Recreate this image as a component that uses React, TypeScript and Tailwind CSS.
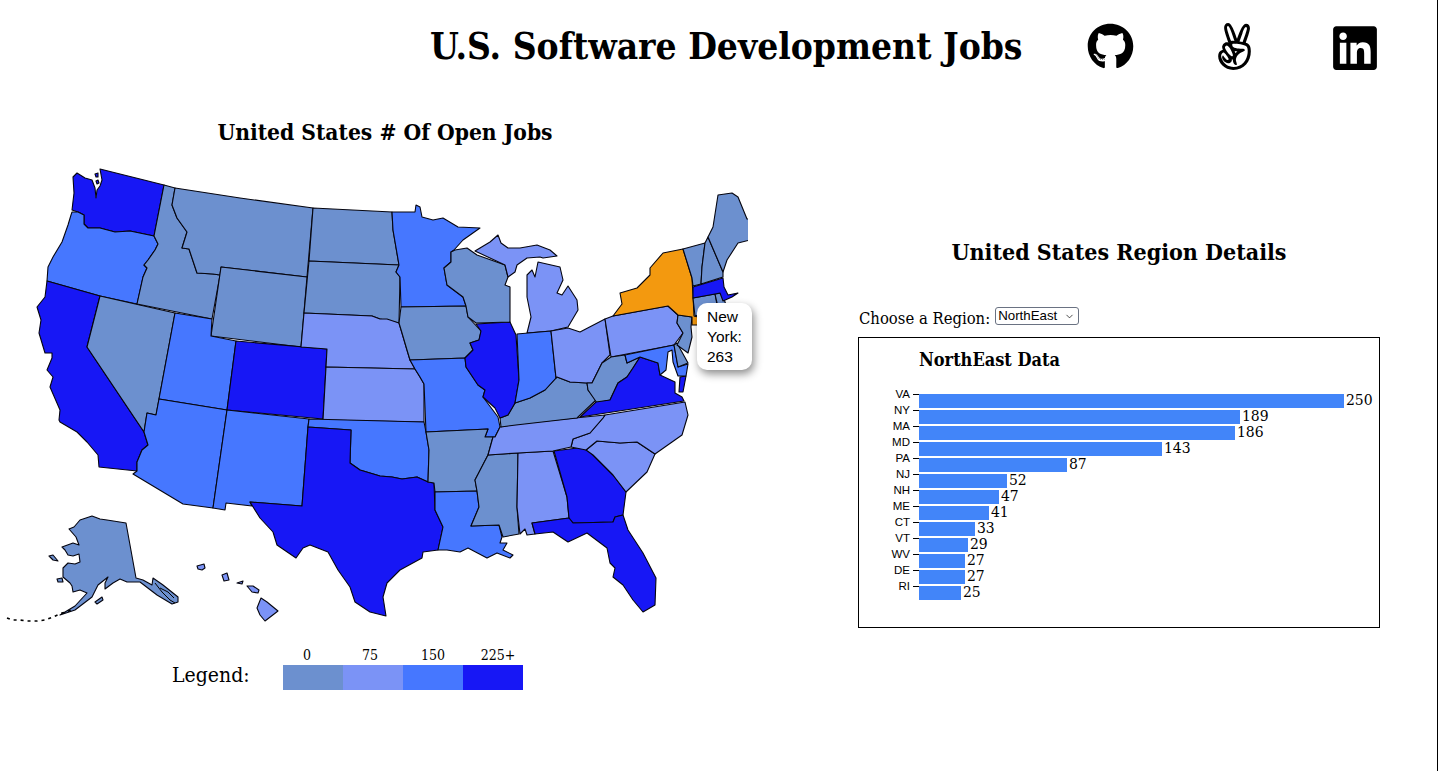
import React from 'react';
import { FaGithub, FaLinkedin, FaAngellist } from 'react-icons/fa';
import { ChevronDown } from 'lucide-react';

const BASE = '#6c90cf';
const LIGHT = '#7b93f6';
const MID = '#4677ff';
const DARK = '#1717f5';
const ORANGE = '#f3990f';

// state outlines, in page pixels
const STATES: [string, string, string][] = [
  ['WA', DARK, '100,169 164,185 154,236 130,231 115,232 100,228 88,228 84,224 84,215 78,212 72,210 74,193 73,177 77,173 85,178 92,180 95,188 96,198 97,190 100,186 102,180'],
  ['WAI', DARK, '95,174 98,173 98,177 96,177'],
  ['WAJ', DARK, '96,181 98,180 99,183 97,184'],
  ['OR', MID, '72,212 78,212 84,215 84,224 88,228 100,228 115,232 130,231 154,236 158,244 155,250 148,260 144,265 147,268 143,277 137,304 100,296 47,281 48,267 53,257 62,242 68,225 71,215'],
  ['CA', DARK, '47,281 100,296 87,347 144,432 148,445 142,450 137,462 137,471 99,467 98,455 87,442 77,432 60,422 59,420 60,410 50,387 53,377 47,370 52,358 52,353 45,353 39,333 41,320 37,307 45,297'],
  ['NV', BASE, '100,296 175,313 159,399 156,415 147,413 144,432 87,347'],
  ['ID', BASE, '164,185 175,188 172,205 177,218 187,232 182,248 189,249 197,273 213,274 220,275 212,319 137,304 143,277 147,268 144,265 148,260 155,250 158,244 154,236'],
  ['MT', BASE, '175,188 240,198 313,208 307,277 221,267 220,275 213,274 197,273 189,249 182,248 187,232 177,218 172,205'],
  ['WY', BASE, '221,267 307,277 301,347 211,336'],
  ['UT', MID, '175,313 212,319 211,336 236,341 227,410 159,399'],
  ['CO', DARK, '236,341 327,349 323,419 227,410'],
  ['AZ', MID, '159,399 227,410 213,508 183,504 133,474 137,471 137,462 142,450 148,445 144,432 147,413 156,415'],
  ['NM', MID, '227,410 309,419 308,427 302,506 250,502 252,506 226,503 225,510 213,508'],
  ['ND', BASE, '313,208 392,212 393,230 399,265 309,261'],
  ['SD', BASE, '309,261 399,265 396,272 400,277 399,323 380,319 372,316 304,313'],
  ['NE', LIGHT, '304,313 372,316 380,319 387,319 399,323 402,333 407,350 410,360 415,369 326,367 327,349 301,347'],
  ['KS', LIGHT, '326,367 415,369 420,377 424,384 424,422 323,420'],
  ['OK', MID, '309,419 424,422 426,432 429,450 428,482 417,477 402,479 392,477 380,476 360,470 350,463 351,430 308,427'],
  ['TX', DARK, '308,427 351,430 350,463 360,470 380,476 392,477 402,479 417,477 428,482 434,483 435,510 443,527 438,550 423,552 422,558 400,570 387,583 383,597 386,616 370,612 355,602 350,587 338,570 328,552 310,545 303,548 296,558 277,545 273,532 260,518 250,502 302,506'],
  ['MN', MID, '392,212 415,212 416,205 420,207 422,217 433,220 443,218 458,227 480,228 463,240 454,250 451,252 451,262 444,268 447,285 463,297 466,306 401,307 400,277 396,272 399,265 393,230'],
  ['IA', BASE, '401,307 466,306 468,317 481,331 479,340 470,343 473,350 465,358 410,360 407,350 402,333 399,323'],
  ['MO', MID, '410,360 465,358 466,367 478,385 485,390 483,397 498,417 500,427 495,437 485,437 488,429 426,432 424,384 420,377 415,369'],
  ['AR', BASE, '426,432 488,429 485,437 493,437 488,455 475,480 477,491 435,492 434,483 428,482 429,450'],
  ['LA', MID, '435,492 477,491 479,507 471,526 499,525 502,537 500,543 507,543 503,550 513,555 510,558 497,553 487,558 468,548 460,552 447,550 438,550 443,527 435,510'],
  ['MS', BASE, '488,455 518,453 517,507 519,534 503,537 499,525 471,526 479,507 477,491 475,480'],
  ['AL', LIGHT, '518,453 553,451 567,497 569,518 532,523 535,534 527,535 525,529 520,534 517,507'],
  ['GA', DARK, '554,451 585,447 593,455 613,475 626,492 623,515 615,517 613,522 573,523 569,518 567,497'],
  ['FL', DARK, '532,523 569,518 573,523 613,522 615,517 623,515 628,530 643,553 656,578 655,605 643,612 633,600 623,585 613,577 615,568 610,563 607,548 587,533 568,542 553,532 535,534'],
  ['SC', LIGHT, '586,450 597,441 620,443 637,442 655,454 647,472 626,492 613,475 593,455'],
  ['NC', LIGHT, '605,415 685,402 688,415 682,435 655,454 637,442 620,443 597,441 586,450 571,447 573,439 590,433 603,418'],
  ['TN', LIGHT, '500,427 516,424 605,415 603,418 590,433 573,439 571,447 553,451 518,453 488,455 493,437 495,437'],
  ['KY', BASE, '500,418 508,415 515,403 530,398 545,390 557,377 570,382 587,383 588,390 596,400 577,418 516,425 501,427'],
  ['IL', DARK, '476,324 510,322 516,335 519,380 515,403 508,415 500,418 495,408 483,397 485,390 478,385 466,367 465,358 473,350 470,343 479,340 481,331'],
  ['WI', BASE, '451,252 455,250 467,248 477,255 505,265 508,277 505,285 510,287 510,307 510,322 476,323 468,317 466,306 463,297 447,285 444,268 451,262'],
  ['MIU', LIGHT, '475,251 490,242 498,235 501,243 508,248 520,248 537,245 550,250 557,256 543,258 540,257 527,258 517,265 515,272 508,277 505,265'],
  ['MIL', LIGHT, '538,262 560,267 563,280 557,293 562,295 568,286 577,300 578,310 568,327 551,331 527,333 531,317 527,297 527,275 532,270 535,277'],
  ['IN', MID, '517,334 551,331 556,378 545,390 530,398 515,403 519,380'],
  ['OH', LIGHT, '551,331 568,328 580,332 605,319 610,355 602,363 592,383 587,383 570,382 557,377 556,378'],
  ['PA', LIGHT, '605,319 613,316 668,306 678,315 677,323 683,333 674,345 611,357'],
  ['WV', BASE, '611,357 625,355 627,363 640,357 633,368 627,377 618,383 610,400 597,403 588,390 587,383 592,383 602,363'],
  ['VA', DARK, '580,417 596,402 610,400 618,383 627,377 633,368 640,357 658,363 660,375 675,382 675,393 682,397 684,401'],
  ['VAE', DARK, '680,377 686,376 683,392 679,392'],
  ['MD', MID, '625,355 674,345 678,367 688,364 686,376 678,376 673,362 672,350 668,352 666,370 660,375 658,363 640,357 627,363'],
  ['DE', BASE, '674,345 677,343 688,363 678,367'],
  ['NJ', BASE, '678,315 692,317 691,327 692,337 688,353 677,345 683,333 677,323'],
  ['NY', ORANGE, '613,316 622,304 620,293 637,288 650,275 650,268 663,253 683,249 692,278 693,295 694,316 698,317 698,325 692,325 692,317 678,315 668,306'],
  ['VT', BASE, '683,249 705,243 702,267 701,284 693,286 692,278'],
  ['NH', BASE, '705,243 708,237 723,272 723,277 701,284 702,267'],
  ['ME', BASE, '708,237 713,227 718,195 732,193 738,197 747,219 750,219 750,240 738,243 727,260 723,272'],
  ['CT', BASE, '693,298 715,294 718,310 695,316'],
  ['RI', BASE, '715,294 722,293 726,305 718,307'],
  ['MA', DARK, '693,287 723,278 724,287 728,295 738,293 732,297 723,301 720,293 715,294 693,298'],
  ['AK', BASE, '126,523 136,578 143,580 152,585 153,578 163,585 178,597 178,602 172,604 157,595 140,582 127,582 120,579 113,583 105,589 105,583 108,577 98,585 92,597 75,610 60,615 75,606 87,593 80,590 73,592 72,586 70,583 63,577 63,568 68,563 75,564 80,562 79,554 73,556 68,555 65,550 62,547 73,543 79,545 76,537 69,529 74,527 80,520 86,518 92,516 100,519 107,520'],
  ['AK2', BASE, '95,602 102,597 103,600 97,604'],
  ['AK3', BASE, '49,556 53,555 58,561 53,560'],
  ['AK4', BASE, '57,579 62,578 63,582 58,582'],
  ['HI1', LIGHT, '197,566 204,564 205,568 202,570 198,569'],
  ['HI2', LIGHT, '222,575 227,573 229,580 224,581'],
  ['HI3', LIGHT, '237,583 243,581 242,584'],
  ['HI4', LIGHT, '247,586 253,586 259,590 258,593 252,592'],
  ['HI5', LIGHT, '261,598 267,602 278,611 265,621 260,615 257,608'],
];

const BARS: [string, number, number][] = [
  ['VA', 250, 425], ['NY', 189, 321], ['MA', 186, 316], ['MD', 143, 243], ['PA', 87, 148],
  ['NJ', 52, 88], ['NH', 47, 80], ['ME', 41, 70], ['CT', 33, 56], ['VT', 29, 49],
  ['WV', 27, 46], ['DE', 27, 46], ['RI', 25, 42],
];

const serif = "font-['DejaVu_Serif_Condensed','DejaVu_Serif',serif]";

function UsMap() {
  return (
    <svg viewBox="0 160 748 470" width={748} height={470} className="block">
      {STATES.map(([id, fill, points]) => (
        <polygon key={id} points={points} fill={fill} stroke="#05050f" strokeWidth={1.1} strokeLinejoin="round" />
      ))}
      {/* southeast islands and the aleutian chain */}
      <polyline points="155,583 162,592 170,600 175,603" fill="none" stroke="#000" strokeWidth={1} />
      <polyline points="160,588 168,592 174,598" fill="none" stroke="#000" strokeWidth={1} />
      <polyline points="7,618 12,620 20,620 27,621 37,621 45,620 53,617 62,613 72,610" fill="none" stroke="#000" strokeWidth={1.6} strokeDasharray="3 4" />
    </svg>
  );
}

function BarChart() {
  return (
    <svg viewBox="0 -8 520 223" width={520} height={223} className="block">
      {BARS.map(([name, value, w], i) => {
        const y = 16 * i;
        return (
          <g key={name}>
            <line x1={54} x2={60} y1={y + 0.5} y2={y + 0.5} stroke="#000" />
            <text x={51} y={y + 4} textAnchor="end" className="font-['Liberation_Sans',sans-serif] text-[11.5px]">{name}</text>
            <rect x={60} y={y} width={w} height={14} fill="#4285f9" />
            <text x={62 + w} y={y + 11} className={`${serif} text-[15.5px]`}>{value}</text>
          </g>
        );
      })}
    </svg>
  );
}

export default function App() {
  return (
    <div className={`w-[1438px] h-screen overflow-hidden bg-white text-black border-r border-black ${serif}`}>
      <header className="flex items-center h-[92px] pl-[430px]">
        <h1 className="w-[592px] pt-0.5 whitespace-nowrap text-[36.8px] font-bold">U.S. Software Development Jobs</h1>
        <div className="flex ml-[26px] pt-1">
          <div className="w-[124px] flex justify-center"><FaGithub size={47} /></div>
          <div className="w-[124px] flex justify-center"><FaAngellist size={47} /></div>
          <div className="w-[118px] flex justify-center"><FaLinkedin size={50} /></div>
        </div>
      </header>

      <main className="flex">
        <section className="relative w-[770px] shrink-0">
          <h2 className="mt-5 h-10 leading-10 text-center text-[22.6px] font-bold">United States # Of Open Jobs</h2>
          <div className="mt-2">
            <UsMap />
          </div>
          <div className="absolute left-[697px] top-[211px] w-[55px] h-[67px] rounded-[10px] bg-white pl-[10px] pt-[4px] font-['Liberation_Sans',sans-serif] text-[15.5px] leading-[20px] shadow-[2px_4px_8px_rgba(0,0,0,0.45)]">
            New York: 263
          </div>
          <div className="flex items-end mt-[15px] pl-[172px]">
            <span className="w-[111px] text-[21px] leading-[28px] pb-[1px]">Legend:</span>
            <div className="w-[240px]">
              <div className="flex text-[14px] leading-[20px] text-center">
                <span className="w-[60px] pr-3">0</span>
                <span className="w-[60px] pr-1.5">75</span>
                <span className="w-[60px]">150</span>
                <span className="w-[60px] pl-2.5 whitespace-nowrap">225+</span>
              </div>
              <div className="flex h-[25px]">
                <div className="w-[60px] bg-[#6c90cf]" />
                <div className="w-[60px] bg-[#7b93f6]" />
                <div className="w-[60px] bg-[#4677ff]" />
                <div className="w-[60px] bg-[#1717f5]" />
              </div>
            </div>
          </div>
        </section>

        <section className="ml-[88px] w-[522px] shrink-0">
          <h2 className="mt-[140px] h-10 leading-10 text-center text-[23px] font-bold">United States Region Details</h2>
          <div className="mt-[35px] flex items-center h-[24px] pl-px text-[16.5px]">
            <span>Choose a Region:</span>
            <div className="relative ml-[5px] mb-[6px] w-[84px] h-[18px]">
              <select defaultValue="NorthEast" className="appearance-none block w-full h-full rounded-[3px] border border-gray-500 bg-white pl-0.5 font-['Liberation_Sans',sans-serif] text-[13.3px] leading-none">
                <option>NorthEast</option>
                <option>South</option>
                <option>MidWest</option>
                <option>West</option>
              </select>
              <ChevronDown size={11} strokeWidth={1.5} className="absolute right-[4px] top-[4px] pointer-events-none" />
            </div>
          </div>
          <div className="mt-[6px] h-[291px] border border-black">
            <h3 className="pl-[60px] pt-[8px] h-[48px] text-[18px] font-bold">NorthEast Data</h3>
            <BarChart />
          </div>
        </section>
      </main>
    </div>
  );
}
